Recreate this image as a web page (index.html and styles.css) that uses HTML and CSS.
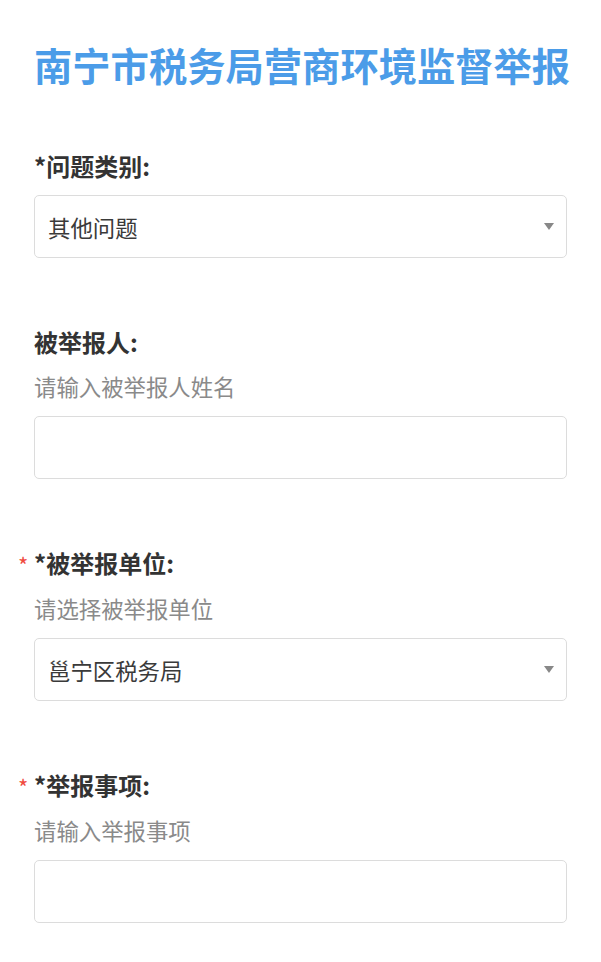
FILE: index.html
```html
<!DOCTYPE html>
<html lang="zh-CN">
<head>
<meta charset="utf-8">
<title>南宁市税务局营商环境监督举报</title>
<link rel="stylesheet" href="styles.css">
</head>
<body>
<div class="page">
  <h1 class="title">南宁市税务局营商环境监督举报</h1>
  <form class="form">
    <div class="item">
      <div class="label">*问题类别:</div>
      <div class="control select"><span class="value">其他问题</span><span class="arrow"></span></div>
    </div>
    <div class="item">
      <div class="label">被举报人:</div>
      <div class="hint">请输入被举报人姓名</div>
      <div class="control"></div>
    </div>
    <div class="item">
      <div class="label required">*被举报单位:</div>
      <div class="hint">请选择被举报单位</div>
      <div class="control select"><span class="value">邕宁区税务局</span><span class="arrow"></span></div>
    </div>
    <div class="item">
      <div class="label required">*举报事项:</div>
      <div class="hint">请输入举报事项</div>
      <div class="control"></div>
    </div>
  </form>
</div>
</body>
</html>
```
FILE: styles.css
```css
* { box-sizing: border-box; }
html, body { margin: 0; padding: 0; background: #fff; }
body {
  font-family: "Noto Sans CJK SC", "Noto Sans", sans-serif;
  color: #333;
}
.page { padding: 40px 34px 0; }
.title {
  margin: 0;
  font-size: 38.3px;
  line-height: 50px;
  font-weight: 700;
  color: #4b9ce8;
  text-align: center;
  white-space: nowrap;
}
.form { margin-top: 60px; }
.item { margin-bottom: 68px; }
.label {
  font-size: 24px;
  line-height: 32px;
  font-weight: 700;
  color: #333;
  margin-bottom: 13px;
}
.label.required::before {
  content: "*";
  color: #f04a3e;
  font-size: 22px;
  font-weight: 400;
  display: inline-block;
  width: 16px;
  margin-left: -16px;
  vertical-align: -1px;
}
.label + .control { margin-top: 5px; }
.hint {
  font-size: 22.4px;
  line-height: 30px;
  color: #8a8a8a;
  margin-bottom: 15px;
}
.control {
  height: 63px;
  border: 1px solid #dcdcdc;
  border-radius: 5px;
  background: #fff;
  display: flex;
  align-items: center;
  padding: 0 13px;
}
.value {
  flex: 1;
  font-size: 22.4px;
  color: #3a3a3a;
}
.arrow {
  width: 0;
  height: 0;
  border-left: 5.5px solid transparent;
  border-right: 5.5px solid transparent;
  border-top: 7px solid #888;
  margin-right: -1px;
}
```
